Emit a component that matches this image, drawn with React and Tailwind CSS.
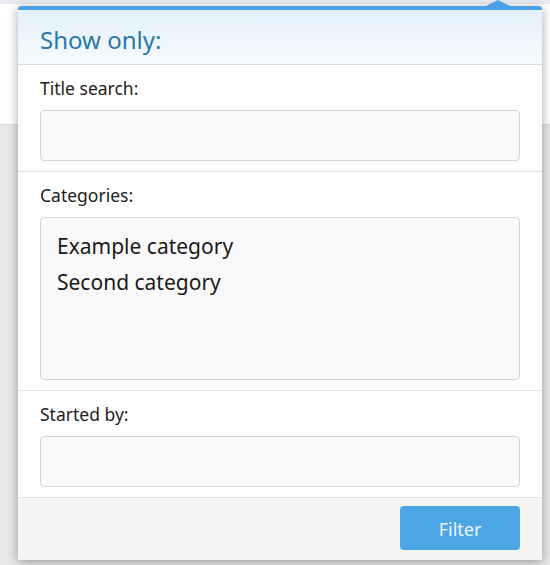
export default function App() {
  const font = { fontFamily: '"Noto Sans", "Open Sans", sans-serif' };
  return (
    <div className="relative w-[550px] h-[565px] overflow-hidden bg-[#e8e8e8]" style={font}>
      <div className="flex flex-col">
        <div className="h-[4px] bg-[#e9ecf2]" />
        <div className="h-[121px] bg-white border-b border-[#d8d8d8]" />
      </div>
      <div className="absolute left-[18px] top-[6px] w-[524px] h-[554px] bg-white shadow-[0_2px_10px_rgba(0,0,0,0.35)] flex flex-col">
        <div className="absolute right-[32px] top-[-6px] w-0 h-0 border-l-[12px] border-r-[12px] border-b-[6px] border-l-transparent border-r-transparent border-b-[#4aa0e2]" />
        <div className="h-[4px] bg-[#4aa0e2] rounded-t-[3px]" />
        <div className="h-[55px] bg-gradient-to-b from-[#e2f0fa] to-[#f8fbfe] border-b border-[#dcdfe2] flex items-center px-[22px] pt-[5px]">
          <span className="text-[24px] text-[#2878ab] leading-none">Show only:</span>
        </div>
        <div className="px-[22px] pt-[11px] pb-[10px] border-b border-[#e2e2e2]">
          <div className="text-[17.5px] leading-[24px] text-[#222]">Title search:</div>
          <div className="mt-[10px] h-[51px] bg-[#f9f9f9] border border-[#d6d6d6] rounded-[4px]" />
        </div>
        <div className="px-[22px] pt-[11px] pb-[10px] border-b border-[#e2e2e2]">
          <div className="text-[17.5px] leading-[24px] text-[#222]">Categories:</div>
          <div className="mt-[10px] h-[163px] bg-[#f9f9f9] border border-[#d6d6d6] rounded-[4px] px-[16px] pt-[10px] text-[21px] leading-[36px] text-[#1a1a1a]">
            <div>Example category</div>
            <div>Second category</div>
          </div>
        </div>
        <div className="px-[22px] pt-[11px] pb-[10px] border-b border-[#e2e2e2]">
          <div className="text-[17.5px] leading-[24px] text-[#222]">Started by:</div>
          <div className="mt-[10px] h-[51px] bg-[#f9f9f9] border border-[#d6d6d6] rounded-[4px]" />
        </div>
        <div className="flex-1 bg-[#f5f5f5] flex justify-end items-start pt-[8px] px-[22px]">
          <button className="w-[120px] h-[44px] pt-[3px] bg-[#4ba6e6] rounded-[4px] text-[18px] text-[#eef6fd]">Filter</button>
        </div>
      </div>
    </div>
  );
}
